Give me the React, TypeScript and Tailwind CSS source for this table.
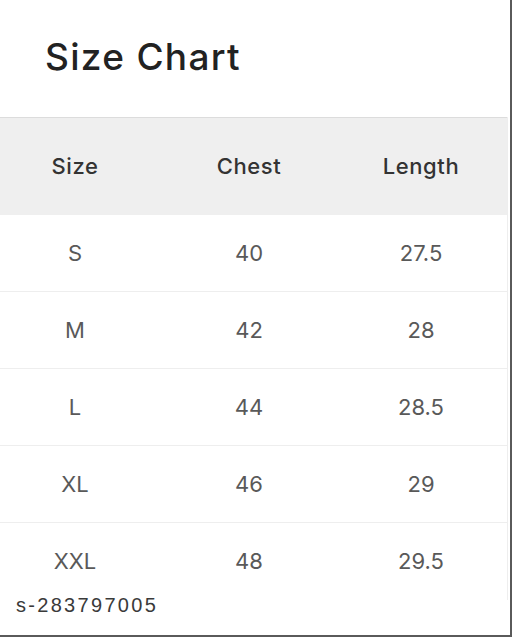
import React from "react";

const rows = [
  ["S", "40", "27.5"],
  ["M", "42", "28"],
  ["L", "44", "28.5"],
  ["XL", "46", "29"],
  ["XXL", "48", "29.5"],
];

export default function App() {
  return (
    <div className="w-[512px] h-[637px] bg-white overflow-hidden" style={{ fontFamily: "Inter, 'Noto Sans', sans-serif" }}>
      <div className="relative w-[512px] h-[637px] border-r-2 border-b-2 border-[#5a5a5a]">
        <div className="h-[117px] pl-[45px] pt-[35px]">
          <h1 className="text-[37px] leading-[44px] font-medium text-[#222] tracking-[1.3px]">Size Chart</h1>
        </div>
        <div className="w-[508px] border-r border-[#eeeeee]">
          <div className="grid grid-cols-[150px_198px_160px] h-[98px] items-center bg-[#efefef] border-t border-[#dcdcdc] text-[22px] font-medium text-[#333] tracking-[0.6px]">
            <div className="text-center">Size</div>
            <div className="text-center">Chest</div>
            <div className="text-center pr-[14px]">Length</div>
          </div>
          {rows.map((r, i) => (
            <div
              key={i}
              className={
                "grid grid-cols-[150px_198px_160px] h-[77px] items-center text-[22px] text-[#595959] " +
                (i < rows.length - 1 ? "border-b border-[#eeeeee]" : "")
              }
            >
              <div className="text-center">{r[0]}</div>
              <div className="text-center">{r[1]}</div>
              <div className="text-center pr-[14px]">{r[2]}</div>
            </div>
          ))}
        </div>
        <div
          className="absolute left-[16px] top-[594px] text-[20px] leading-[22px] text-[#3a3a3a] tracking-[2.3px]"
          style={{ fontFamily: "'Liberation Sans', sans-serif" }}
        >
          s-283797005
        </div>
      </div>
    </div>
  );
}
